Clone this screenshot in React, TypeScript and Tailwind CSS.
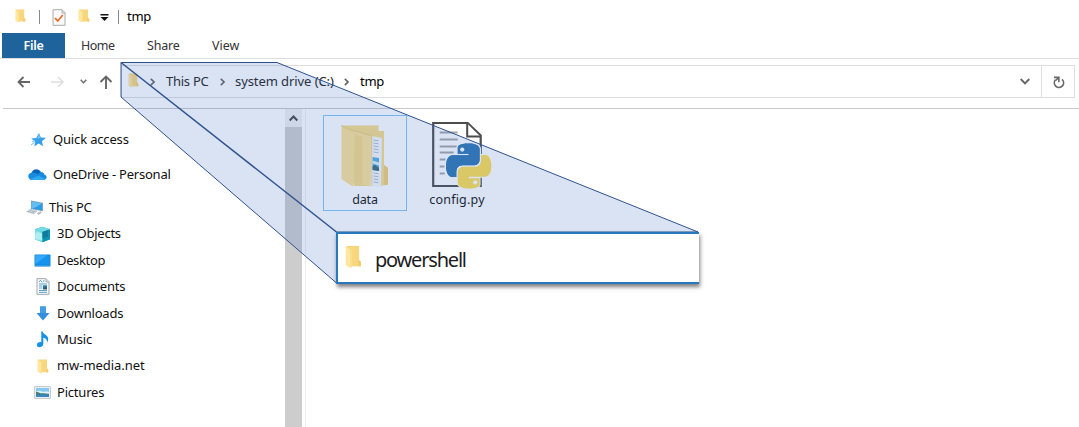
import type { ReactNode } from "react";

function Folder({ className }: { className: string }) {
  return (
    <svg className={className} viewBox="0 0 12 15" preserveAspectRatio="none">
      <path d="M1 .6h9v10.2l1.2.5v2H3z" fill="#f7d67c" />
      <path d="M.5.6 4 3v11.5L.5 12.7z" fill="#ffe7a0" />
      <path d="M4 3l1.2-.8v10.7L4 14.5z" fill="#fbdc89" />
      <path d="M9.3 9.2l1.9 1v3.1H9.3z" fill="#f2cb6a" />
    </svg>
  );
}

function StarIcon() {
  return (
    <svg width="17" height="16" viewBox="0 0 17 16">
      <path d="M9 1l1.8 4.6 5.2.2-4 3.4 1.1 5L8.7 11.4 4.3 14.5l1-4.8L1.2 6.6l5-.5z" fill="#38a0ea" />
      <path d="M1 13l4-3M2 10l3-1.5" stroke="#7cc3f2" />
      <path d="M9 2l1.4 4L7 6.5z" fill="#6fc4f7" />
    </svg>
  );
}

function CloudIcon() {
  return (
    <svg width="19" height="13" viewBox="0 0 19 13">
      <path d="M3.4 5.2C4.5 1 10-.7 13 4L7 10 2 9z" fill="#0864b8" />
      <path d="M12.6 3.9c2.3-.2 3.4 1.1 3.7 2.5C20 8 18.8 12 15.6 12H5L11 5z" fill="#168bdc" />
      <path d="M3.4 4.7C7 4 9 6 17 10.7c-.5.8-1.2 1.3-2 1.3H4.3C-1 12-.8 5 3.4 4.7z" fill="#198cdf" />
      <path d="M2 11.2L10.5 7.7 17 10.8c-.6.8-1 1.2-2 1.2H4.3z" fill="#2eaaf0" />
    </svg>
  );
}

function PcIcon() {
  return (
    <svg width="18" height="17" viewBox="0 0 18 17">
      <path d="M5 1.5l12 2.3v8.5L5 10z" fill="#8ca4b5" />
      <path d="M5.7 2.4l10.4 2v7L5.7 9.4z" fill="#2c9be7" />
      <path d="M5.7 2.4l10.4 2-9 5.2-1.4-.3z" fill="#64bdf2" />
      <path d="M.5 12.6l3.7-2.3 7 1.7-3.3 2.7z" fill="#dce3e9" stroke="#a9b5bf" strokeWidth=".6" />
      <path d="M2 12.5l6 1.4M3.7 11.4l6 1.4M11.4 14.5l3-1.7 1 .6-2.8 2z" stroke="#93a2ad" strokeWidth=".7" fill="#ccd5dd" />
    </svg>
  );
}

function CubeIcon() {
  return (
    <svg width="17" height="17" viewBox="0 0 17 17">
      <path d="M1 3.3L8.5.7 16 3.3v10L8.5 16.2 1 13.3z" fill="#26a9bd" />
      <path d="M1 3.3L8.5.7 16 3.3 8.5 6z" fill="#74dbe4" />
      <path d="M1 3.3L8.5 6v10.2L1 13.3z" fill="#7bdfe7" />
      <path d="M3 5.8l5.5 2v6.5L1 13.3V9z" fill="#aeeef1" />
      <path d="M8.5 6L16 3.3v10l-7.5 2.9z" fill="#0d93b0" />
      <path d="M8.5 6L14 4v6.5l-5.5 2z" fill="#107b9c" />
    </svg>
  );
}

function DesktopIcon() {
  return (
    <svg width="17" height="13" viewBox="0 0 17 13">
      <rect x=".5" y=".5" width="16" height="12" rx=".6" fill="#1683d9" />
      <path d="M1.3 1.3h14.4v9.3H1.3z" fill="#1693ef" />
      <path d="M1.3 10V1.3h12z" fill="#36a8f7" />
      <path d="M1 11.7h15" stroke="#40a4e6" strokeWidth=".8" />
    </svg>
  );
}

function DocumentIcon() {
  return (
    <svg width="14" height="17" viewBox="0 0 14 17">
      <path d="M1 .7h9l3 3v12.6H1z" fill="#f9fafb" stroke="#a2a8ad" />
      <path d="M10 1v3h3" fill="#ddd" stroke="#9ba3a9" strokeWidth=".8" />
      <path d="M3 4l1.4-1.7L6 4.2M7 3h1.6M3 6h8M3 12.5h8M3 14.3h8" stroke="#4a98cb" strokeWidth=".9" fill="none" />
      <path d="M3 8h3.3M3 10h3.3" stroke="#68a7cf" />
      <path d="M7 7.3h4v4H7z" fill="#2879a9" />
      <path d="M7 11.3L9 9l2 1v1.3z" fill="#39515f" />
    </svg>
  );
}

function DownloadIcon() {
  return (
    <svg width="14" height="15" viewBox="0 0 14 15">
      <path d="M4 .5h6V7h3.5L7 14.4.5 7H4z" fill="#348fda" />
      <path d="M4 .5h6V7H4z" fill="#459ee3" />
    </svg>
  );
}

function MusicIcon() {
  return (
    <svg width="13" height="17" viewBox="0 0 13 17">
      <path d="M5.3.5h1.5c.3 3.1 5.6 3.4 5.4 7.8 0 1.3-.5 2.5-1.3 3.4.5-3-1.1-4.4-3.6-5v6.1c0 4.1-6.4 4.6-6.5 1.3C.8 11.5 3.2 10.6 5.3 11z" fill="#1592e6" />
    </svg>
  );
}

function PictureIcon() {
  return (
    <svg width="17" height="13" viewBox="0 0 17 13">
      <path d="M.7.7h15.6v11.6H.7z" fill="#fafafa" stroke="#b9c0c5" />
      <path d="M2 2h13v9H2z" fill="#85c8f1" />
      <path d="M2 6c4-3 5 0 8-.3 2-.1 3-.3 5 .3v3H2z" fill="#e0f3fb" />
      <path d="M2 6c3-.4 4 1.8 7 1.2 2-.2 4 .8 6 .5V11H2z" fill="#477c70" />
      <path d="M2 8.8c4-.2 7-.9 13 0V11H2z" fill="#3687bd" />
    </svg>
  );
}

function Chevron({ className = "" }: { className?: string }) {
  return (
    <svg className={className} width="5" height="8" viewBox="0 0 5 8" fill="none">
      <path d="M.8.9L4 4 .8 7.1" stroke="#666" strokeWidth="1.6" />
    </svg>
  );
}

function Row({ icon, label, pad, gap, height = "h-[26.4px]", iconWidth = "w-[17px]" }: {
  icon: ReactNode; label: ReactNode; pad: string; gap: string; height?: string; iconWidth?: string;
}) {
  return (
    <div className={`flex shrink-0 items-center ${height} ${pad} ${gap}`}>
      <span className={`flex shrink-0 justify-center ${iconWidth}`}>{icon}</span>
      {label}
    </div>
  );
}

function LargeFolder() {
  return (
    <svg width="50" height="66" viewBox="0 0 50 66">
      <path d="M1.5 1.5h37v5.5h5.5v34l4 3v16.500l-8 1.500H14z" fill="#f9dc88" />
      <path d="M31.500 12l10.500 2-1 49.500-11-1.500z" fill="#f6f8fa" />
      <path d="M33.500 16l5 .8M33.500 19l5 .8M33.500 22l5 .8M33.500 25l5 .8M33.500 28l5 .8M33.500 49l5 .8M33.500 52l5 .8M33.500 55l5 .8M33.500 58l5 .8" stroke="#a9bfd3" />
      <path d="M32.500 33l6.500 1v13l-6.500-1z" fill="#50afe5" />
      <path d="M32.500 36.500l6.500 2v3l-6.500-2z" fill="#d9f0fb" />
      <path d="M32.500 42l2.500-1 4 3v3l-6.500-1z" fill="#3b6a7b" />
      <path d="M1.5 1.5L8 5l24 6-1.500 51.500L14 58.500l-1 4.200L1.500 55z" fill="#fde298" />
      <path d="M14.500 9.500l8 3.500v47L14 58.500z" fill="#f8d985" />
      <path d="M1.5 1.5L6.500 5M8 3.500l1 2 22.500 6" fill="none" stroke="#eccb75" />
      <path d="M31.800 11v51" stroke="#eccb75" strokeWidth=".7" />
      <path d="M44 41l4 3v16.500l-4 .8z" fill="#f3cf72" />
    </svg>
  );
}

const SNAKE =
  "M14.25.18l.9.2.73.26.59.3.45.32.34.34.25.34.16.33.1.3.04.26.02.2-.01.13V8.5l-.05.63-.13.55-.21.46-.26.38-.3.31-.33.25-.35.19-.35.14-.33.1-.3.07-.26.04-.21.02H8.77l-.69.05-.59.14-.5.22-.41.27-.33.32-.27.35-.2.36-.15.37-.1.35-.07.32-.04.27-.02.21v3.06H3.17l-.21-.03-.28-.07-.32-.12-.35-.18-.36-.26-.36-.36-.35-.46-.32-.59-.28-.73-.21-.88-.14-1.05-.05-1.23.06-1.22.16-1.04.24-.87.32-.71.36-.57.4-.44.42-.33.42-.24.4-.16.36-.1.32-.05.24-.01h.16l.06.01h8.16v-.83H6.18l-.01-2.75-.02-.37.05-.34.11-.31.17-.28.25-.26.31-.23.38-.2.44-.18.51-.15.58-.12.64-.1.71-.06.77-.04.84-.02 1.27.05z";

function PythonFile() {
  return (
    <svg className="overflow-visible" width="62" height="70" viewBox="0 0 62 70">
      <g transform="translate(5.7 -.5)">
        <path d="M1.500 1.500h34.500L49 14v50.500H1.500z" fill="#fff" stroke="#4d4d4d" strokeWidth="2.2" />
        <path d="M35.500 2v13h13" fill="#fff" stroke="#4d4d4d" strokeWidth="2" />
        <path d="M8 11h18M8 18h18M8 25h18M8 31h14M8 38h6M8 45h5M8 52h5" stroke="#a5a5a5" strokeWidth="2" />
      </g>
      <g transform="translate(20.200 21.500) scale(1.875)">
        <path d={SNAKE} fill="#2e76b5" stroke="#fff" strokeWidth="1.500" paintOrder="stroke" />
        <path d={SNAKE} transform="rotate(180 12 12)" fill="#ffdc4f" stroke="#fff" strokeWidth="1" paintOrder="stroke" />
        <path d={SNAKE} fill="#2e76b5" />
        <circle cx="8.550" cy="3.250" r="1.150" fill="#fff" />
        <circle cx="15.450" cy="20.750" r="1.150" fill="#fff" />
      </g>
    </svg>
  );
}

export default function App() {
  return (
    <main className="relative flex h-[427px] w-[1079px] flex-col overflow-hidden bg-white font-['Noto_Sans',sans-serif] text-[13px] whitespace-nowrap text-[#222]">
      <header className="flex h-[33px] shrink-0 items-center pl-[15px] text-black">
        <Folder className="mt-[-2px] h-[14px] w-[11px]" />
        <i className="ml-[13px] h-[14px] w-px bg-[#888]" />
        <svg className="ml-3 mt-px" width="14" height="17" viewBox="0 0 14 17" fill="none">
          <path d="M1 .7h9l3 3v12.6H1z" fill="#fafafa" stroke="#aaa" />
          <path d="M10 1v3h3" stroke="#aaa" />
          <path d="M3 9.2l2.8 2.8 5-6" stroke="#e56f32" strokeWidth="1.8" />
        </svg>
        <Folder className="mt-[-2px] ml-3 h-[14px] w-[12px]" />
        <svg className="ml-[10px] mt-px" width="9" height="7" viewBox="0 0 9 7">
          <path d="M.5 0h8v1.5h-8zM.5 3h8l-4 4z" fill="#111" />
        </svg>
        <i className="ml-[9px] h-[14px] w-px bg-[#888]" />
        <span className="ml-2 tracking-[-.3px]">tmp</span>
      </header>
      <nav className="flex h-[26px] shrink-0 border-b border-[#dedede] pl-[2px] text-[12.5px] leading-[26px] text-[#333]">
        <b className="h-[25px] w-[63px] bg-[#1e639b] text-center font-semibold tracking-[-.3px] text-white">File</b>
        <span className="ml-4 w-[66px] tracking-[-.5px]">Home</span>
        <span className="w-[65px] tracking-[-.2px]">Share</span>
        <span className="tracking-[-.05px]">View</span>
      </nav>
      <section className="ml-[3px] flex h-[50px] shrink-0 border-b border-[#c8c8c8] pt-[6px]">
        <div className="flex h-[33px] w-[118px] items-center pl-[14px]">
          <svg width="14" height="12" viewBox="0 0 14 12" fill="none">
            <path d="M13 6H1.5M6.5 1L1.5 6l5 5" stroke="#666" strokeWidth="1.8" />
          </svg>
          <svg className="ml-5" width="13" height="12" viewBox="0 0 13 12" fill="none">
            <path d="M0 6h12M7 1l5 5-5 5" stroke="#ddd" strokeWidth="1.5" />
          </svg>
          <svg className="mb-px ml-4" width="7" height="5" viewBox="0 0 7 5" fill="none">
            <path d="M.7.8l2.8 3 2.8-3" stroke="#777" strokeWidth="1.6" />
          </svg>
          <svg className="mt-px ml-[12px]" width="14" height="14" viewBox="0 0 14 14" fill="none">
            <path d="M7 14V1.5M1.5 7L7 1.5 12.5 7" stroke="#666" strokeWidth="1.9" />
          </svg>
        </div>
        <div className="flex h-[33px] w-[954px] items-center border border-[#dedede] pl-[6px]">
          <Folder className="mt-[-3px] h-[15px] w-[11px]" />
          <Chevron className="ml-[11px]" />
          <span className="ml-[11px] w-[43px] tracking-[-.25px]">This PC</span>
          <Chevron className="ml-[11px]" />
          <span className="ml-[10px] w-[99px] tracking-[-.08px]">system drive (C:)</span>
          <Chevron className="ml-[10px]" />
          <span className="ml-[11px] tracking-[-.25px] text-black">tmp</span>
          <svg className="mr-[11px] ml-auto" width="10" height="7" viewBox="0 0 10 7" fill="none">
            <path d="M.7 1L5 5.3 9.3 1" stroke="#666" strokeWidth="1.9" />
          </svg>
          <div className="flex h-full w-[33px] items-center justify-center border-l border-[#dedede]">
            <svg className="mt-px ml-px" width="12" height="13" viewBox="0 0 12 13" fill="none">
              <path d="M9 3.4A4.6 4.6 0 1 1 2.5 3.8" stroke="#6a6a6a" strokeWidth="1.7" />
              <path d="M1 1.4h4.9v4.8M5.7 1.6L2.6 4.5" stroke="#6a6a6a" strokeWidth="1.6" />
            </svg>
          </div>
        </div>
      </section>
      <section className="flex min-h-0 flex-1">
        <aside className="flex w-[285px] flex-col pt-[14px] text-[#111]">
          <Row height="h-[34px]" pad="pl-[30px]" gap="gap-[6px]" icon={<StarIcon />} label={<span className="tracking-[-.16px]">Quick access</span>} />
          <Row height="h-[34px] pt-px" pad="pl-[28px]" gap="gap-[6px]" iconWidth="w-[19px]" icon={<CloudIcon />} label={<span className="tracking-[-.23px]">OneDrive - Personal</span>} />
          <Row height="h-[30px] pt-[3px]" pad="pl-[26px]" gap="gap-[5px]" iconWidth="w-[18px]" icon={<PcIcon />} label={<span className="tracking-[-.25px]">This PC</span>} />
          <Row pad="pl-[34px]" gap="gap-[6px]" icon={<CubeIcon />} label={<span className="tracking-[-.25px]">3D Objects</span>} />
          <Row pad="pl-[34px]" gap="gap-[6px]" icon={<DesktopIcon />} label={<span className="tracking-[-.35px]">Desktop</span>} />
          <Row pad="pl-[34px]" gap="gap-[6px]" icon={<DocumentIcon />} label={<span className="tracking-[-.2px]">Documents</span>} />
          <Row pad="pl-[34px]" gap="gap-[6px]" icon={<DownloadIcon />} label={<span className="tracking-[-.2px]">Downloads</span>} />
          <Row pad="pl-[34px]" gap="gap-[6px]" icon={<MusicIcon />} label={<span className="tracking-[-.1px]">Music</span>} />
          <Row pad="pl-[34px]" gap="gap-[6px]" icon={<Folder className="h-[15px] w-[12px]" />} label={<span className="tracking-[-.05px]">mw-media.net</span>} />
          <Row pad="pl-[34px]" gap="gap-[6px]" icon={<PictureIcon />} label={<span className="tracking-[-.2px]">Pictures</span>} />
        </aside>
        <div className="flex w-[17px] flex-col bg-[#cdcdcd]">
          <div className="flex h-[18px] items-center justify-center bg-[#f0f0f0]">
            <svg width="9" height="7" viewBox="0 0 9 7" fill="none">
              <path d="M.7 5.5l3.8-4 3.8 4" stroke="#444" strokeWidth="2" />
            </svg>
          </div>
        </div>
        <div className="w-[4px] border-r border-[#f0f0f0]" />
        <div className="flex pt-[6px] pl-[17px] text-[12.5px] text-[#111]">
          <div className="flex h-[96px] w-[84px] flex-col items-center border border-[#83c5f7] pt-[8px]">
            <LargeFolder />
            <span className="leading-[20px] tracking-[-.2px]">data</span>
          </div>
          <div className="ml-[19px] flex w-[62px] flex-col items-center pt-[7px]">
            <PythonFile />
            <span className="mt-[-2px] leading-[20px] tracking-[.2px]">config.py</span>
          </div>
        </div>
      </section>
      <svg className="pointer-events-none absolute inset-0" width="1079" height="427" viewBox="0 0 1079 427" fill="none">
        <path d="M121 62.5h156L698 232H336.5v51L121 97z" fill="#4472c4" fillOpacity=".2" />
        <path d="M121 62.5h156L698 232H336.5v51L121 97z" stroke="#2f528f" strokeWidth="1" />
        <path d="M121 62.5L336.5 232" stroke="#2f528f" strokeWidth="1.5" />
      </svg>
      <div className="absolute top-[232px] left-[336px] flex h-[52px] w-[363px] items-center border-y-2 border-l-2 border-[#2878bd] bg-white pl-[7px] text-[20px] text-[#1c1c24] shadow-[1px_3px_4px_rgba(0,0,0,0.5)]">
        <Folder className="mt-[-3px] h-[24px] w-[17px]" />
        <span className="mt-[3px] ml-[13px] tracking-[-1.2px]">powershell</span>
      </div>
    </main>
  );
}
